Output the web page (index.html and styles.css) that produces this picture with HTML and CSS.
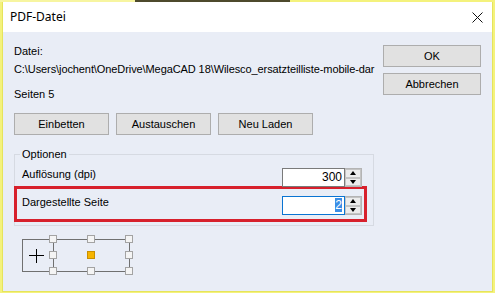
FILE: index.html
```html
<!DOCTYPE html>
<html lang="de">
<head>
  <meta charset="UTF-8">
  <title>PDF-Datei</title>
  <link rel="stylesheet" href="styles.css">
</head>
<body>

  <div class="screen">
    <div class="window">
      <div class="titlebar">
        <span class="title">PDF-Datei</span>
        <svg class="close" width="11" height="11" viewBox="0 0 11 11">
          <path d="M0.5 0.5 L10.5 10.5 M10.5 0.5 L0.5 10.5" stroke="#111" stroke-width="1" fill="none"/>
        </svg>
      </div>

      <div class="dialog">
        <div class="main">
          <div class="label">Datei:</div>
          <div class="path">C:\Users\jochent\OneDrive\MegaCAD 18\Wilesco_ersatzteilliste-mobile-dar</div>
          <div class="pages">Seiten 5</div>

          <div class="actions">
            <button class="button">Einbetten</button>
            <button class="button">Austauschen</button>
            <button class="button">Neu Laden</button>
          </div>

          <fieldset class="options">
            <legend>Optionen</legend>
            <div class="row">
              <span class="row-label">Auflösung (dpi)</span>
              <div class="spin">
                <span class="spin-value">300</span>
                <span class="spin-buttons"><span class="spin-up"></span><span class="spin-down"></span></span>
              </div>
            </div>
            <div class="row marked">
              <span class="row-label">Dargestellte Seite</span>
              <div class="spin">
                <span class="spin-value focused"><span class="selected">2</span></span>
                <span class="spin-buttons"><span class="spin-up"></span><span class="spin-down"></span></span>
              </div>
            </div>
          </fieldset>

          <!-- anchor point picker -->
          <svg class="anchor" width="116" height="46" viewBox="0 0 116 46">
            <rect x="2.5" y="7.5" width="31" height="32" fill="none" stroke="#707070"/>
            <rect x="33.5" y="7.5" width="76" height="32" fill="none" stroke="#707070"/>
            <path d="M9 23.5 H24 M16.5 17 V31" stroke="#000" fill="none"/>
            <g fill="#f4f4f4" stroke="#a3a3a3">
              <rect x="29.5" y="3.5" width="7" height="7"/>
              <rect x="67.5" y="3.5" width="7" height="7"/>
              <rect x="105.5" y="3.5" width="7" height="7"/>
              <rect x="29.5" y="19.5" width="7" height="7"/>
              <rect x="105.5" y="19.5" width="7" height="7"/>
              <rect x="29.5" y="35.5" width="7" height="7"/>
              <rect x="67.5" y="35.5" width="7" height="7"/>
              <rect x="105.5" y="35.5" width="7" height="7"/>
            </g>
            <rect x="67.5" y="19.5" width="7" height="7" fill="#f6b400" stroke="#c98f00"/>
          </svg>
        </div>

        <div class="side">
          <button class="button side-button">OK</button>
          <button class="button side-button">Abbrechen</button>
        </div>
      </div>
    </div>
  </div>

</body>
</html>
```

FILE: styles.css
```css
body {
  margin: 0;
  background: #f4f27c;
  font-family: "Liberation Sans", Arial, sans-serif;
  font-size: 11px;
  color: #000;
}

.screen {
  width: 495px;
  height: 293px;
  overflow: hidden;
  background: linear-gradient(to right, #f7f5a0 0 135px, #4d4a2c 135px 290px, #f4f27c 290px) top / 100% 2px no-repeat;
}

.window {
  margin: 2px 0 0 2px;
  width: 491px;
  height: 290px;
  box-sizing: border-box;
  border: 1px solid #e6e45c;
  border-top: 0;
  background: #e9edf6;
  display: flex;
  flex-direction: column;
}

.titlebar {
  height: 30px;
  flex: none;
  background: #fff;
  display: flex;
  align-items: center;
  justify-content: space-between;
  padding: 0 9px 0 7px;
}

.title {
  font-family: "Noto Sans", sans-serif;
  font-size: 12px;
  line-height: 16px;
}

.close {
  display: block;
}

.dialog {
  display: flex;
  gap: 9px;
  padding: 13px 10px 0 11px;
}

.main {
  width: 360px;
  flex: none;
}

.label,
.path,
.pages {
  line-height: 13px;
  white-space: nowrap;
}

.path {
  margin-top: 5px;
  letter-spacing: -0.09px;
}

.pages {
  margin-top: 12px;
}

.actions {
  display: flex;
  gap: 7px;
  margin-top: 12px;
}

.button {
  width: 95px;
  height: 22px;
  padding: 0;
  background: #e1e1e1;
  border: 1px solid #adadad;
  font-family: "Liberation Sans", Arial, sans-serif;
  font-size: 11px;
  color: #000;
}

.side {
  width: 98px;
  display: flex;
  flex-direction: column;
  gap: 6px;
}

.side-button {
  width: 98px;
}

.options {
  margin: 13px 0 0;
  padding: 0 11px 3px 7px;
  border: 1px solid #d6dae2;
}

.options legend {
  padding: 0 2px;
  margin-left: -2px;
  line-height: 12px;
}

.row {
  display: flex;
  justify-content: space-between;
  align-items: flex-start;
  height: 18px;
  margin-top: 8px;
}

.row-label {
  line-height: 13px;
}

.marked {
  height: 19px;
  margin: 0 -5px 0 -8px;
  padding: 7px 2px 4px 5px;
  border: 3px solid #d7202c;
}

.spin {
  display: flex;
  height: 19px;
  flex: none;
}

.spin-value {
  width: 63px;
  box-sizing: border-box;
  border: 1px solid #7a7a7a;
  background: #fff;
  text-align: right;
  padding-right: 2px;
  font-size: 12px;
  line-height: 17px;
}

.spin-value.focused {
  border-color: #0a74d2;
}

.selected {
  background: #3a8ee6;
  color: #fff;
}

.spin-buttons {
  width: 17px;
  box-sizing: border-box;
  border: 1px solid #b4b4b4;
  border-left: 0;
  background: #e5e5e5;
  display: flex;
  flex-direction: column;
}

.spin-up,
.spin-down {
  flex: 1;
  display: flex;
  align-items: center;
  justify-content: center;
  border: 1px solid #c4c4c4;
  background: #ececec;
}

.spin-up::after {
  content: "";
  border-left: 3px solid transparent;
  border-right: 3px solid transparent;
  border-bottom: 4px solid #000;
}

.spin-down::after {
  content: "";
  border-left: 3px solid transparent;
  border-right: 3px solid transparent;
  border-top: 4px solid #000;
}

.anchor {
  display: block;
  margin: 6px 0 0 6px;
}
```
